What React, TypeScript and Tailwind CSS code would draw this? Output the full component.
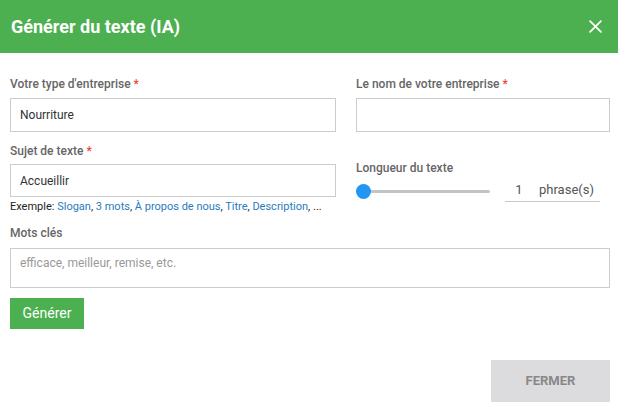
import React from "react";

function Label({ children, required }: { children: React.ReactNode; required?: boolean }) {
  return (
    <div className="text-[12px] leading-[16px] font-medium text-[#666666]">
      {children}
      {required && <span className="text-[#f44336]"> *</span>}
    </div>
  );
}

export default function App() {
  const links = ["Slogan", "3 mots", "À propos de nous", "Titre", "Description"];
  return (
    <div className="w-[618px] h-[409px] bg-white overflow-hidden" style={{ fontFamily: "Roboto, 'Liberation Sans', sans-serif" }}>
      <div className="h-[53px] bg-[#4caf50] flex items-center justify-between pl-[11px] pr-[16px]">
        <div className="text-white text-[18px] font-bold">Générer du texte (IA)</div>
        <svg width="13" height="13" viewBox="0 0 12 12" className="text-white">
          <path d="M1 1 L11 11 M11 1 L1 11" stroke="currentColor" strokeWidth="1.6" strokeLinecap="round" />
        </svg>
      </div>
      <div className="pl-[10px] pr-[8px] pt-[23px]">
        <div className="flex gap-[20px]">
          <div className="w-[326px] shrink-0 flex flex-col">
            <Label required>Votre type d'entreprise</Label>
            <div className="mt-[6px] h-[34px] border border-[#cccccc] flex items-center pl-[9px] text-[12px] text-[#333333]">
              Nourriture
            </div>
            <div className="mt-[11px]">
              <Label required>Sujet de texte</Label>
            </div>
            <div className="mt-[5px] h-[33px] border border-[#cccccc] flex items-center pl-[9px] text-[12px] text-[#333333]">
              Accueillir
            </div>
            <div className="mt-[3px] text-[11px] leading-[14px] text-[#222222]">
              Exemple:{" "}
              {links.map((l) => (
                <span key={l}>
                  <span className="text-[#2a7bc0]">{l}</span>,{" "}
                </span>
              ))}
              ...
            </div>
          </div>
          <div className="w-[254px] shrink-0 flex flex-col">
            <Label required>Le nom de votre entreprise</Label>
            <div className="mt-[6px] h-[34px] border border-[#cccccc]" />
            <div className="mt-[28px]">
              <Label>Longueur du texte</Label>
            </div>
            <div className="flex items-center mt-[3px] h-[24px]">
              <div className="relative w-[134px] h-[15px] flex items-center">
                <div className="w-full h-[3px] bg-[#c4c4c4] rounded-full" />
                <div className="absolute left-0 top-0 w-[15px] h-[15px] rounded-full bg-[#2196f3]" />
              </div>
              <div className="ml-[15px] w-[95px] h-[22px] border-b border-[#c8c8c8] flex items-end pb-[2px] text-[13px] text-[#555555]">
                <span className="w-[28px] text-center">1</span>
                <span className="ml-[6px]">phrase(s)</span>
              </div>
            </div>
          </div>
        </div>
        <div className="mt-[11px]">
          <Label>Mots clés</Label>
        </div>
        <div className="mt-[7px] h-[40px] border border-[#cccccc] pl-[9px] pt-[5px] text-[12px] text-[#999999]">
          efficace, meilleur, remise, etc.
        </div>
        <button className="mt-[10px] h-[31px] w-[74px] bg-[#4caf50] text-white text-[14px] flex items-center justify-center">
          Générer
        </button>
        <div className="flex justify-end mt-[31px]">
          <button className="w-[119px] h-[42px] bg-[#dcdcde] text-[#888888] text-[13px] font-bold">
            FERMER
          </button>
        </div>
      </div>
    </div>
  );
}
